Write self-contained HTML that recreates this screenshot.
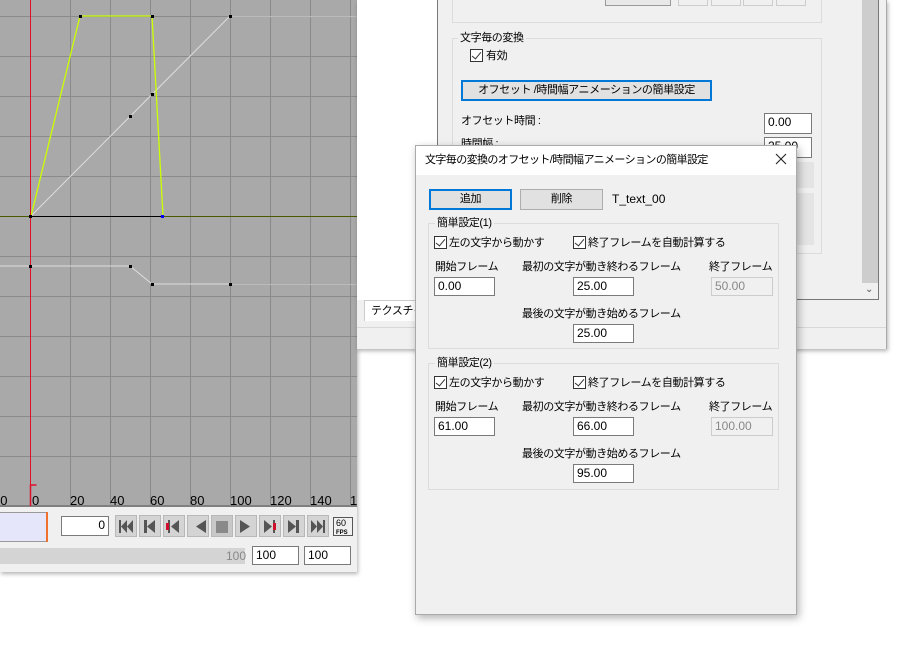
<!DOCTYPE html>
<html><head><meta charset="utf-8"><style>
*{margin:0;padding:0;box-sizing:border-box}
body{width:907px;height:645px;background:#fff;position:relative;overflow:hidden;font-family:"Liberation Sans","Noto Sans CJK JP",sans-serif;font-size:12px;color:#000}
.a{position:absolute}
.t{position:absolute;white-space:nowrap;font-size:11px;letter-spacing:-0.4px;line-height:14px}
.inp{position:absolute;background:#fff;border:1px solid #7a7a7a;font-size:12px;line-height:17px;padding-left:3px}
.dis{background:#f0f0f0;border-color:#ccc;color:#888}
.btn{position:absolute;background:#e1e1e1;border:1px solid #adadad;text-align:center;font-size:11px;letter-spacing:-0.4px;line-height:19px;white-space:nowrap}
.btnb{border:2px solid #0078d7;line-height:17px}
.grp{position:absolute;border:1px solid #dcdcdc}
.lg{position:absolute;background:#f0f0f0;padding:0 2px;top:-8px;left:6px;font-size:11px;letter-spacing:-0.4px;line-height:14px;white-space:nowrap}
.cb{position:absolute;width:13px;height:13px;border:1px solid #333;background:#fff}
.cb:after{content:"";position:absolute;left:3px;top:0px;width:4px;height:8px;border-right:1.5px solid #333;border-bottom:1.5px solid #333;transform:rotate(40deg)}
.pb{position:absolute;top:515px;width:22px;height:22px;background:#d4d4d4;border:1px solid #b8b8b8}
</style></head><body>

<div class="a" style="left:0;top:0;width:357px;height:572px;background:#f0f0f0;box-shadow:1px 2px 4px rgba(0,0,0,.3)"></div>
<svg class="a" style="left:0;top:0" width="357" height="507">
<rect width="357" height="507" fill="#a9a9a9"/>
<g stroke="#8a8a8a" stroke-width="1">
<line x1="70.5" y1="0" x2="70.5" y2="497"/><line x1="110.5" y1="0" x2="110.5" y2="497"/><line x1="150.5" y1="0" x2="150.5" y2="497"/><line x1="190.5" y1="0" x2="190.5" y2="497"/><line x1="230.5" y1="0" x2="230.5" y2="497"/><line x1="270.5" y1="0" x2="270.5" y2="497"/><line x1="310.5" y1="0" x2="310.5" y2="497"/><line x1="350.5" y1="0" x2="350.5" y2="497"/>
<line x1="0" y1="16.5" x2="357" y2="16.5"/><line x1="0" y1="56.5" x2="357" y2="56.5"/><line x1="0" y1="96.5" x2="357" y2="96.5"/><line x1="0" y1="136.5" x2="357" y2="136.5"/><line x1="0" y1="176.5" x2="357" y2="176.5"/><line x1="0" y1="256.5" x2="357" y2="256.5"/><line x1="0" y1="296.5" x2="357" y2="296.5"/><line x1="0" y1="336.5" x2="357" y2="336.5"/><line x1="0" y1="376.5" x2="357" y2="376.5"/><line x1="0" y1="416.5" x2="357" y2="416.5"/><line x1="0" y1="456.5" x2="357" y2="456.5"/>
</g>
<line x1="0" y1="216.5" x2="357" y2="216.5" stroke="#4a5a00"/>
<line x1="31" y1="216.5" x2="163" y2="216.5" stroke="#000"/>
<line x1="31" y1="216" x2="230" y2="16" stroke="#ddd"/>
<line x1="230" y1="16.5" x2="357" y2="16.5" stroke="#bbb"/>
<polyline points="31,216 80,16 152,16 163,216" fill="none" stroke="#ccff00" stroke-width="1.3"/>
<polyline points="0,266 31,266 130,266 152,284 230,284" fill="none" stroke="#ddd"/>
<line x1="230" y1="284.5" x2="357" y2="284.5" stroke="#bbb"/>
<line x1="30.5" y1="0" x2="30.5" y2="497" stroke="#e0102a"/>
<g fill="#000"><rect x="79" y="15" width="3" height="3"/><rect x="151" y="15" width="3" height="3"/><rect x="229" y="15" width="3" height="3"/><rect x="151" y="93" width="3" height="3"/><rect x="129" y="115" width="3" height="3"/><rect x="29" y="215" width="3" height="3"/><rect x="29" y="265" width="3" height="3"/><rect x="129" y="265" width="3" height="3"/><rect x="151" y="283" width="3" height="3"/><rect x="229" y="283" width="3" height="3"/></g>
<rect x="161" y="215" width="3" height="3" fill="#00f"/>
<line x1="0" y1="506" x2="357" y2="506" stroke="#555"/>
<g stroke="#888"><line x1="70.5" y1="497" x2="70.5" y2="506"/><line x1="110.5" y1="497" x2="110.5" y2="506"/><line x1="150.5" y1="497" x2="150.5" y2="506"/><line x1="190.5" y1="497" x2="190.5" y2="506"/><line x1="230.5" y1="497" x2="230.5" y2="506"/><line x1="270.5" y1="497" x2="270.5" y2="506"/><line x1="310.5" y1="497" x2="310.5" y2="506"/><line x1="350.5" y1="497" x2="350.5" y2="506"/></g>
<path d="M30.5 506V485h6" stroke="#e0102a" fill="none" stroke-width="1.5"/>
<g font-family="Liberation Sans" font-size="13" fill="#000"><text x="-7" y="505">20</text><text x="32" y="505">0</text><text x="70" y="505">20</text><text x="110" y="505">40</text><text x="150" y="505">60</text><text x="190" y="505">80</text><text x="230" y="505">100</text><text x="270" y="505">120</text><text x="310" y="505">140</text><text x="350" y="505">1</text></g>
</svg>
<div class="a" style="left:0;top:512px;width:48px;height:30px;background:#e6e6fa;border:1px solid #999;border-left:none"></div>
<div class="a" style="left:46px;top:512px;width:2px;height:30px;background:#f07030"></div>
<div class="inp" style="left:61px;top:516px;width:48px;height:20px;text-align:right;padding-right:3px">0</div>
<div class="pb" style="left:115px"></div><div class="pb" style="left:139px"></div><div class="pb" style="left:163px"></div><div class="pb" style="left:187px"></div><div class="pb" style="left:211px;background:#c8c8c8"></div><div class="pb" style="left:235px"></div><div class="pb" style="left:259px"></div><div class="pb" style="left:283px"></div><div class="pb" style="left:307px"></div>
<svg class="a" style="left:0;top:515px" width="357" height="22">
<g fill="#555">
<rect x="119" y="5" width="2" height="13"/><path d="M127 5v13l-6-6.5z M133 5v13l-6-6.5z"/>
<rect x="144" y="5" width="3" height="13"/><path d="M155 5v13l-8-6.5z"/>
<path d="M179 5v13l-8-6.5z"/><rect x="168" y="5" width="2" height="13"/><rect x="166" y="8" width="3" height="7" fill="#d0102a"/>
<path d="M206 5v13l-10-6.5z"/>
<rect x="216" y="6" width="12" height="12" fill="#8a8a8a"/>
<path d="M240 5v13l10-6.5z"/>
<path d="M264 5v13l8-6.5z"/><rect x="273" y="5" width="2" height="13"/><rect x="273" y="8" width="3" height="7" fill="#d0102a"/>
<path d="M288 5v13l8-6.5z"/><rect x="296" y="5" width="3" height="13"/>
<path d="M311 5v13l6-6.5z M317 5v13l6-6.5z"/><rect x="323" y="5" width="2" height="13"/>
</g>
<rect x="333.5" y="2.5" width="19" height="18" fill="#f0f0f0" stroke="#555"/>
<text x="336" y="11" font-size="9" font-family="Liberation Sans">60</text><text x="336" y="19" font-size="6" font-family="Liberation Sans" font-weight="bold">FPS</text>
</svg>
<div class="a" style="left:0;top:548px;width:245px;height:16px;background:#d4d4d4"></div>
<div class="a" style="left:226px;top:549px;color:#888;font-size:12px;line-height:14px">100</div>
<div class="inp" style="left:252px;top:546px;width:47px;height:19px">100</div>
<div class="inp" style="left:304px;top:546px;width:47px;height:19px">100</div>

<div class="a" style="left:357px;top:0;width:530px;height:349px;background:#f0f0f0;box-shadow:1px 2px 4px rgba(0,0,0,.3);border-right:1px solid #aaa"></div>
<div class="a" style="left:357px;top:0;width:80px;height:300px;background:#fff"></div>
<div class="a" style="left:357px;top:300px;width:80px;height:28px;border-bottom:1px solid #ccc"></div>
<div class="a" style="left:364px;top:300px;width:80px;height:21px;border:1px solid #ccc;background:#fff;border-bottom:none"></div>
<div class="t" style="left:371px;top:304px">テクスチャ</div>
<div class="a" style="left:437px;top:0;width:442px;height:300px;border:1px solid #777;border-top:none;background:#f0f0f0"></div>
<div class="a" style="left:862px;top:0;width:16px;height:283px;background:#cdcdcd"></div>
<div class="a" style="left:865px;top:284px;color:#555;font-size:10px">&#8964;</div>
<div class="a" style="left:357px;top:327px;width:529px;height:1px;background:#d8d8d8"></div>
<div class="grp" style="left:452px;top:-5px;width:370px;height:28px"></div>
<div class="a" style="left:605px;top:-2px;width:66px;height:8px;border:1px solid #999;background:#e8e8e8"></div>
<div class="a" style="left:678px;top:-2px;width:30px;height:8px;border:1px solid #ccc"></div>
<div class="a" style="left:711px;top:-2px;width:30px;height:8px;border:1px solid #ccc"></div>
<div class="a" style="left:743px;top:-2px;width:30px;height:8px;border:1px solid #ccc"></div>
<div class="a" style="left:776px;top:-2px;width:30px;height:8px;border:1px solid #ccc"></div>
<div class="grp" style="left:452px;top:38px;width:370px;height:216px"><div class="lg" style="left:5px">文字毎の変換</div></div>
<div class="cb" style="left:470px;top:49px"></div><div class="t" style="left:486px;top:49px">有効</div>
<div class="btn btnb" style="left:461px;top:80px;width:251px;height:21px">オフセット /時間幅アニメーションの簡単設定</div>
<div class="t" style="left:461px;top:114px">オフセット時間 :</div>
<div class="inp" style="left:764px;top:113px;width:48px;height:21px">0.00</div>
<div class="t" style="left:461px;top:137px">時間幅 :</div>
<div class="inp" style="left:764px;top:137px;width:48px;height:21px">25.00</div>
<div class="a" style="left:790px;top:162px;width:24px;height:26px;background:#e4e4e4"></div>
<div class="a" style="left:790px;top:193px;width:24px;height:52px;background:#e4e4e4"></div>

<div class="a" style="left:415px;top:145px;width:382px;height:470px;background:#f0f0f0;border:1px solid #aaa;box-shadow:2px 3px 8px rgba(0,0,0,.3)"></div>
<div class="a" style="left:416px;top:146px;width:380px;height:29px;background:#fff"></div>
<div class="t" style="left:425px;top:153px;letter-spacing:-0.6px">文字毎の変換のオフセット/時間幅アニメーションの簡単設定</div>
<svg class="a" style="left:775px;top:153px" width="12" height="12"><path d="M1 1L11 11M11 1L1 11" stroke="#222" stroke-width="1.1"/></svg>
<div class="btn btnb" style="left:429px;top:189px;width:83px;height:21px">追加</div>
<div class="btn" style="left:520px;top:189px;width:83px;height:21px">削除</div>
<div class="a" style="left:612px;top:192px;font-size:12px;line-height:14px">T_text_00</div>

<div class="grp" style="left:428px;top:223px;width:351px;height:126px"><div class="lg">簡単設定(1)</div></div>
<div class="cb" style="left:434px;top:236px"></div><div class="t" style="left:449px;top:236px">左の文字から動かす</div>
<div class="cb" style="left:573px;top:236px"></div><div class="t" style="left:588px;top:236px">終了フレームを自動計算する</div>
<div class="t" style="left:435px;top:260px">開始フレーム</div>
<div class="t" style="left:522px;top:260px">最初の文字が動き終わるフレーム</div>
<div class="t" style="left:709px;top:260px">終了フレーム</div>
<div class="inp" style="left:434px;top:277px;width:61px;height:19px">0.00</div>
<div class="inp" style="left:573px;top:277px;width:61px;height:19px">25.00</div>
<div class="inp dis" style="left:711px;top:277px;width:62px;height:19px">50.00</div>
<div class="t" style="left:522px;top:307px">最後の文字が動き始めるフレーム</div>
<div class="inp" style="left:573px;top:324px;width:61px;height:19px">25.00</div>

<div class="grp" style="left:428px;top:363px;width:351px;height:127px"><div class="lg">簡単設定(2)</div></div>
<div class="cb" style="left:434px;top:376px"></div><div class="t" style="left:449px;top:376px">左の文字から動かす</div>
<div class="cb" style="left:573px;top:376px"></div><div class="t" style="left:588px;top:376px">終了フレームを自動計算する</div>
<div class="t" style="left:435px;top:400px">開始フレーム</div>
<div class="t" style="left:522px;top:400px">最初の文字が動き終わるフレーム</div>
<div class="t" style="left:709px;top:400px">終了フレーム</div>
<div class="inp" style="left:434px;top:417px;width:61px;height:19px">61.00</div>
<div class="inp" style="left:573px;top:417px;width:61px;height:19px">66.00</div>
<div class="inp dis" style="left:711px;top:417px;width:62px;height:19px">100.00</div>
<div class="t" style="left:522px;top:447px">最後の文字が動き始めるフレーム</div>
<div class="inp" style="left:573px;top:464px;width:61px;height:19px">95.00</div>
</body></html>
